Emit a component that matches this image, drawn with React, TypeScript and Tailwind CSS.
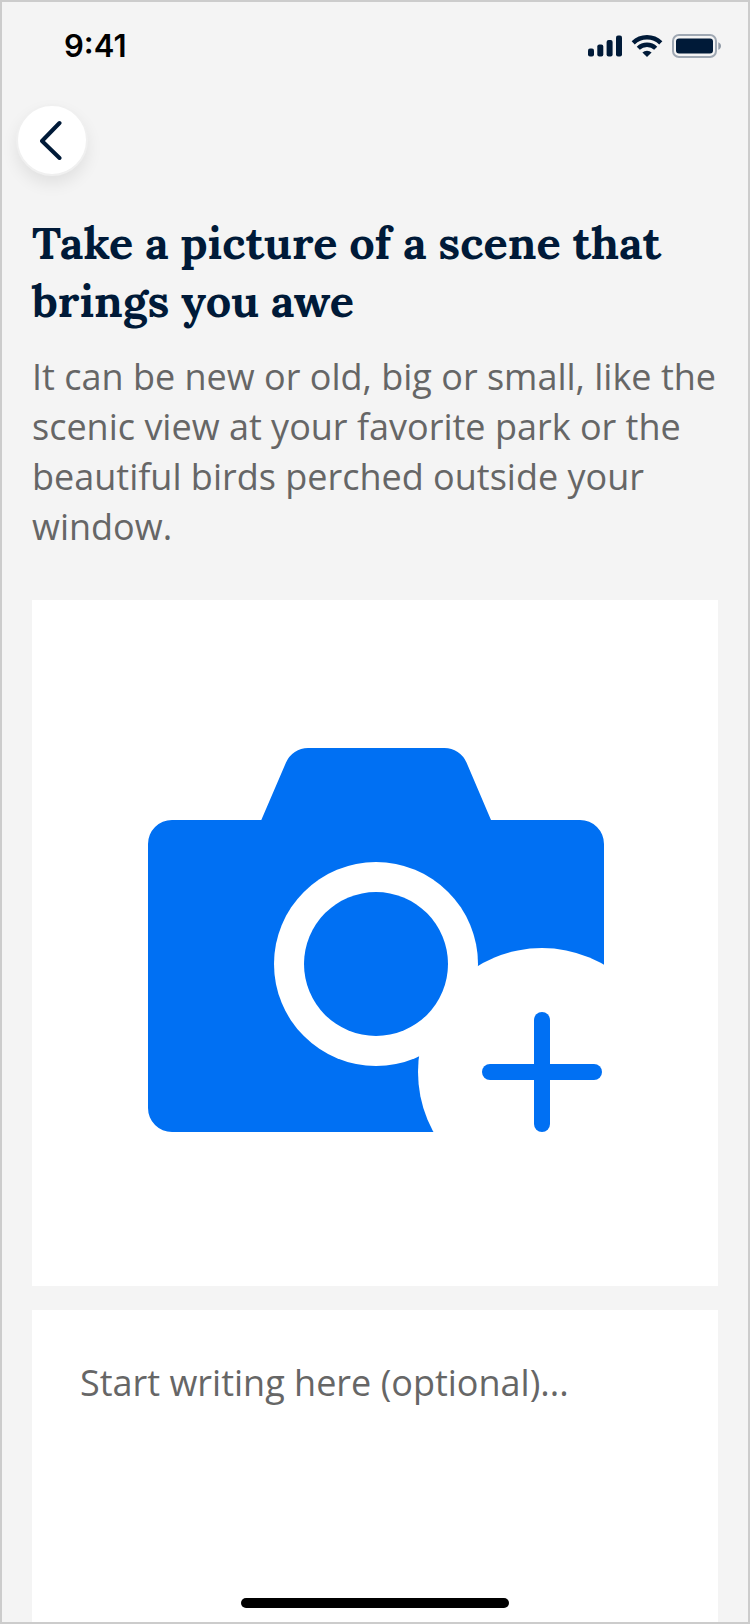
function SignalIcon() {
  return (
    <svg viewBox="0 0 34 22" className="h-[22px] w-[34px]" fill="#001a38" aria-hidden="true">
      <rect x="0" y="13.5" width="6" height="8" rx="2" />
      <rect x="9.3" y="9.5" width="6" height="12" rx="2" />
      <rect x="18.6" y="5" width="6" height="16.5" rx="2" />
      <rect x="28" y="0.5" width="6" height="21" rx="2" />
    </svg>
  );
}

function WifiIcon() {
  return (
    <svg viewBox="0 0 32 24" className="h-6 w-8" fill="none" stroke="#001a38" aria-hidden="true">
      <path d="M2.2 8.9A19.6 19.6 0 0 1 29.8 8.9" strokeWidth="4.4" />
      <path d="M7.3 14.3A12.4 12.4 0 0 1 24.7 14.3" strokeWidth="4.4" />
      <path d="M11.4 18.6A6.6 6.6 0 0 1 20.6 18.6L16 23Z" fill="#001a38" stroke="none" />
    </svg>
  );
}

function BatteryIcon() {
  return (
    <svg viewBox="0 0 49 24" className="h-6 w-[49px]" aria-hidden="true">
      <rect x="1" y="1" width="43" height="22" rx="6" fill="none" stroke="#001a38" strokeOpacity="0.35" strokeWidth="2" />
      <rect x="4" y="4.500" width="37" height="15" rx="3" fill="#001a38" />
      <path d="M46.3 8.2C48 8.9 49 10.3 49 12s-1 3.1-2.7 3.8Z" fill="#001a38" fillOpacity="0.4" />
    </svg>
  );
}

function CameraPlusIcon() {
  return (
    <svg viewBox="0 0 686 686" className="block w-full" fill="#0070f3" aria-hidden="true">
      <path d="M140 220H229.300L254 162.500A24 24 0 0 1 276 148H412.500A24 24 0 0 1 434.500 162.500L459 220H548A24 24 0 0 1 572 244V532H140A24 24 0 0 1 116 508V244A24 24 0 0 1 140 220Z" />
      <circle cx="344" cy="364" r="102" fill="#fff" />
      <circle cx="510" cy="472" r="124" fill="#fff" />
      <circle cx="344" cy="364" r="72" />
      <rect x="502" y="412" width="16" height="120" rx="8" />
      <rect x="450" y="464" width="120" height="16" rx="8" />
    </svg>
  );
}

export default function App() {
  return (
    <div className="relative flex min-h-screen flex-col border-2 border-[#cccccc] bg-[#f4f4f4] font-['Open_Sans',sans-serif]">
      <header className="flex items-center justify-between pt-6 pr-[27px] pl-[62px]">
        <span className="font-['Inter',sans-serif] text-[31px] leading-10 font-semibold text-black">9:41</span>
        <div className="flex items-center gap-[9px]">
          <SignalIcon />
          <WifiIcon />
          <BatteryIcon />
        </div>
      </header>

      <nav className="px-[14px] pt-[38px]">
        <button
          type="button"
          aria-label="Back"
          className="flex size-[72px] items-center justify-center rounded-full border-2 border-[#f0f0f0] bg-white shadow-[0_8px_16px_rgba(0,0,0,0.08)]"
        >
          <svg viewBox="0 0 24 40" className="h-10 w-6" fill="none" stroke="#001a38" strokeWidth="4" strokeLinecap="round" strokeLinejoin="round" aria-hidden="true">
            <path d="M19.500 3L2 21L19.500 38" />
          </svg>
        </button>
      </nav>

      <main className="flex grow flex-col px-[30px] pt-[38px]">
        <h1 className="font-['Lora','Liberation_Serif',serif] text-[45px] leading-[58px] font-bold text-[#001a38]">
          Take a picture of a scene that brings you awe
        </h1>
        <p className="mt-[22px] text-[36px] leading-[50px] text-[#666666]">
          It can be new or old, big or small, like the scenic view at your favorite park or the beautiful birds perched
          outside your window.
        </p>
        <button type="button" aria-label="Add a photo" className="mt-12 block w-full bg-white">
          <CameraPlusIcon />
        </button>
        <textarea
          aria-label="Your reflection"
          placeholder="Start writing here (optional)..."
          className="mt-6 block min-h-[312px] w-full grow resize-none bg-white px-12 pt-12 text-[36px] leading-[50px] text-[#666666] outline-none placeholder:text-[#666666]"
        />
      </main>

      <div className="absolute inset-x-0 bottom-[14px] flex justify-center">
        <div className="h-[10px] w-[268px] rounded-full bg-black" />
      </div>
    </div>
  );
}
